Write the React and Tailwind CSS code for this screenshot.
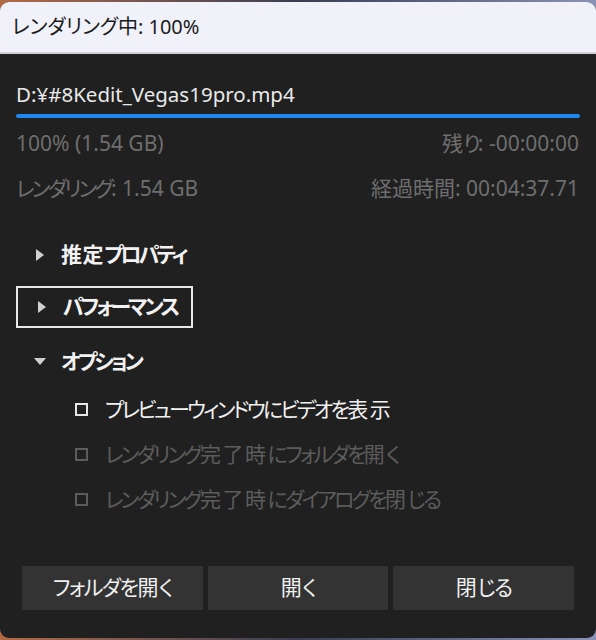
import { useState } from "react";

const font = {
  fontFamily: '"Noto Sans", "Noto Sans CJK JP", sans-serif',
  fontFeatureSettings: '"palt"',
};

// the reference font has narrow kana and wide kanji, so nudge both
function J({ text, tight = "tracking-[-2.7px]", wide = "tracking-[1.5px]" }) {
  const parts = text.split(/([\u3040-\u30ff]+|[\u4e00-\u9fff]+)/);
  return (
    <>
      {parts.map((p, i) => {
        if (/[\u3040-\u30ff]/.test(p)) return <span key={i} className={tight}>{p}</span>;
        if (/[\u4e00-\u9fff]/.test(p)) return <span key={i} className={wide}>{p}</span>;
        return <span key={i}>{p}</span>;
      })}
    </>
  );
}

function Arrow({ open }) {
  return open ? (
    <svg width="12" height="8" viewBox="0 0 12 8" className="text-[#d0d0d0]">
      <path d="M0 0 L12 0 L6 7 Z" fill="currentColor" />
    </svg>
  ) : (
    <svg width="8" height="12" viewBox="0 0 8 12" className="text-[#d0d0d0]">
      <path d="M0 0 L8 6 L0 12 Z" fill="currentColor" />
    </svg>
  );
}

function Section({ label, open, focused }) {
  return (
    <div
      className={
        "flex h-[42px] items-center gap-[15px] pl-[18px] text-[21px] font-bold text-[#f2f2f2] " +
        (focused ? "w-[177px] border-2 border-[#e8e8e8]" : "w-fit")
      }
    >
      <div className="flex w-3 justify-center">
        <Arrow open={open} />
      </div>
      <span className="whitespace-nowrap">
        <J text={label} tight="tracking-[-3px]" wide="tracking-[0.5px]" />
      </span>
    </div>
  );
}

function Check({ label, disabled }) {
  return (
    <div className={"flex h-[45px] items-center gap-[17px] pl-[75px] text-[21px] " + (disabled ? "text-[#5c5c5c]" : "text-[#f0f0f0]")}>
      <div className={"h-[13px] w-[13px] border-2 " + (disabled ? "border-[#5c5c5c]" : "border-[#e6e6e6]")} />
      <span className="whitespace-nowrap">
        <J text={label} />
      </span>
    </div>
  );
}

export default function App() {
  const [sections] = useState([
    { label: "推定プロパティ", open: false },
    { label: "パフォーマンス", open: false, focused: true },
  ]);
  return (
    <div className="h-[640px] w-[596px] bg-gradient-to-r from-[#b36a45] via-[#3a3d52] to-[#8a93b8] pt-[2px]" style={font}>
      <div className="flex h-[636px] flex-col overflow-hidden rounded-t-[9px] rounded-b-[9px] bg-[#202020]">
        <div className="flex h-[52px] items-center border-b-2 border-[#cfd0d6] bg-[#f0f1f9] pl-3 text-[20px] text-[#1a1a1a]">
          レンダリング中: 100%
        </div>
        <div className="px-4 pt-[26px]">
          <div className="text-[20.5px] leading-[28px] text-[#e9e9e9]">D:¥#8Kedit_Vegas19pro.mp4</div>
          <div className="mt-[6px] h-[4px] w-full rounded-full bg-[#1e88f0]" />
          <div className="mt-[11px] flex justify-between text-[21px] leading-[28px] text-[#6e6e6e]">
            <span>100% (1.54 GB)</span>
            <span className="pr-[1px]">
              <J text="残り: -00:00:00" wide="" />
            </span>
          </div>
          <div className="mt-[17px] flex justify-between text-[21px] leading-[28px] text-[#6e6e6e]">
            <span>
              <J text="レンダリング: 1.54 GB" />
            </span>
            <span className="pr-[1px]">経過時間: 00:04:37.71</span>
          </div>
        </div>
        <div className="mt-[32px] flex flex-col gap-[10px] pl-4">
          {sections.map((s) => (
            <Section key={s.label} {...s} />
          ))}
        </div>
        <div className="mt-[13px] pl-4">
          <Section label="オプション" open />
        </div>
        <div className="mt-[4px] flex flex-col">
          <Check label="プレビューウィンドウにビデオを表示" />
          <Check label="レンダリング完了時にフォルダを開く" disabled />
          <Check label="レンダリング完了時にダイアログを閉じる" disabled />
        </div>
        <div className="mt-auto mb-[28px] flex gap-[5px] px-[22px]">
          {["フォルダを開く", "開く", "閉じる"].map((b) => (
            <button key={b} className="h-[44px] flex-1 bg-[#333333] text-[21px] text-[#f0f0f0]">
              <J text={b} tight="tracking-[-1.5px]" wide="tracking-[0.5px]" />
            </button>
          ))}
        </div>
      </div>
    </div>
  );
}
